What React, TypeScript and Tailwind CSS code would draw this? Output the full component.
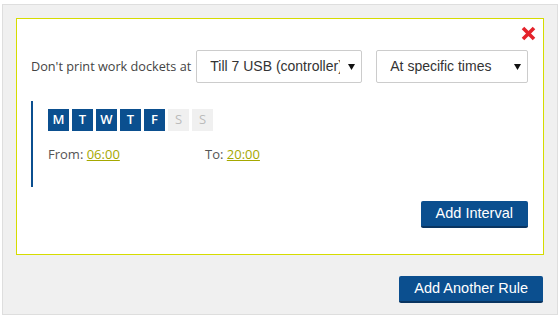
const days = [
  { label: 'M', on: true },
  { label: 'T', on: true },
  { label: 'W', on: true },
  { label: 'T', on: true },
  { label: 'F', on: true },
  { label: 'S', on: false },
  { label: 'S', on: false },
];

function Caret() {
  return (
    <svg width="7" height="6" viewBox="0 0 7 6" className="shrink-0">
      <path d="M0 0h7L3.5 6z" fill="#111" />
    </svg>
  );
}

function FakeSelect({ value, width }: { value: string; width: string }) {
  return (
    <div
      className={`${width} h-[33px] flex items-center border border-[#cccccc] rounded-[2px] bg-white pl-[13px] pr-[6px] font-['Liberation_Sans',Arial,sans-serif] text-[14px] text-[#333]`}
    >
      <span className="flex-1 overflow-hidden whitespace-nowrap mr-[8px]">{value}</span>
      <Caret />
    </div>
  );
}

function BlueButton({ children }: { children: React.ReactNode }) {
  return (
    <button className="h-[27px] px-[15px] rounded-[2px] bg-[#0b4f8f] border-b-2 border-[#0a3561] text-white text-[14.5px] font-['Liberation_Sans',Arial,sans-serif] leading-none">
      {children}
    </button>
  );
}

export default function App() {
  return (
    <div className="w-[560px] h-[323px] bg-white pt-[4px] pl-[2px] font-['Open_Sans',sans-serif]">
      <div className="w-[556px] h-[311px] border border-[#dedede] bg-[#f0f0f0] p-[13px] flex flex-col">
        <div className="w-[528px] h-[237px] shrink-0 border border-[#d5dc00] bg-white flex flex-col pl-[14px] pr-[15px]">
          <div className="flex justify-end pt-[7px] -mr-[8px]">
            <svg width="15" height="15" viewBox="0 0 15 15">
              <path d="M2 2L13 13M13 2L2 13" stroke="#e4232b" strokeWidth="3.6" />
            </svg>
          </div>
          <div className="flex items-center mt-[9px]">
            <span className="text-[12.7px] text-[#444] mr-[5px] whitespace-nowrap">Don't print work dockets at</span>
            <FakeSelect value="Till 7 USB (controller)" width="w-[166px]" />
            <FakeSelect value="At specific times" width="w-[152px] ml-[14px]" />
          </div>
          <div className="mt-[18px] h-[86px] border-l-2 border-[#0b4f8f] pl-[15px] pt-[8px]">
            <div className="flex gap-[3px]">
              {days.map((d, i) => (
                <div
                  key={i}
                  className={`w-[21px] h-[22px] flex items-center justify-center text-[13px] ${
                    d.on ? 'bg-[#0b4f8f] text-white font-semibold' : 'bg-[#f0f0f0] text-[#bbbbbb]'
                  }`}
                >
                  {d.label}
                </div>
              ))}
            </div>
            <div className="flex mt-[14px] text-[13px] text-[#555]">
              <div className="w-[157px]">
                From: <span className="text-[#a5a800] underline">06:00</span>
              </div>
              <div>
                To: <span className="text-[#a5a800] underline">20:00</span>
              </div>
            </div>
          </div>
          <div className="flex justify-end mt-[14px]">
            <BlueButton>Add Interval</BlueButton>
          </div>
        </div>
        <div className="flex justify-end mt-[21px] mr-[1px]">
          <BlueButton>Add Another Rule</BlueButton>
        </div>
      </div>
    </div>
  );
}
